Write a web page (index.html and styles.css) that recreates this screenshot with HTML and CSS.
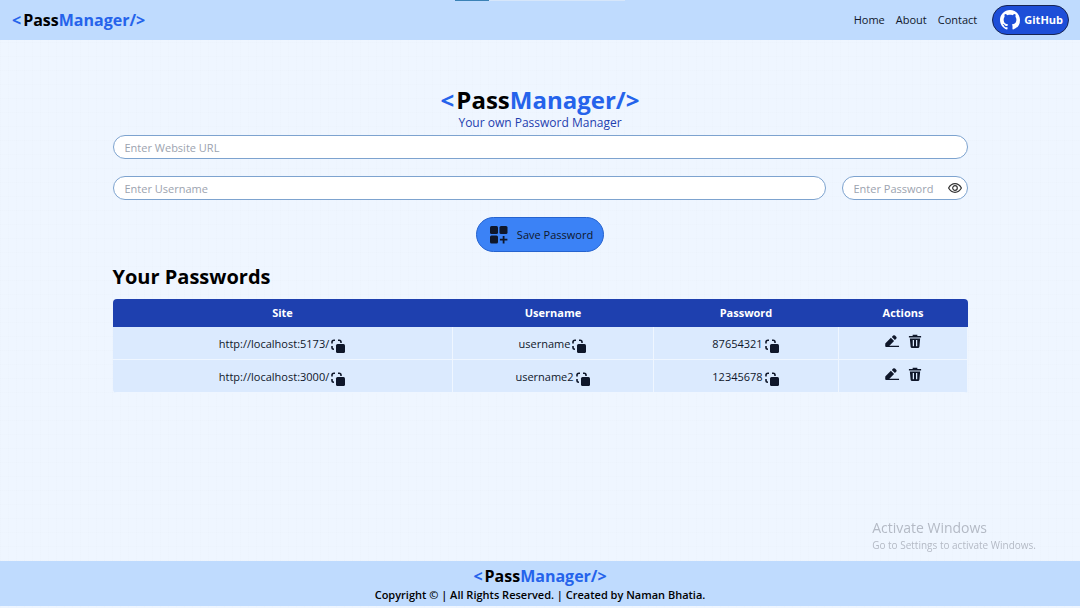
FILE: index.html
```html
<!DOCTYPE html>
<html lang="en">
<head>
    <meta charset="UTF-8">
    <meta name="viewport" content="width=device-width, initial-scale=1.0">
    <title>PassManager</title>
    <link rel="stylesheet" href="styles.css">
</head>
<body>
    <!-- icons used more than once -->
    <svg class="sprite" aria-hidden="true">
        <symbol id="copy" viewBox="0 0 14 14">
            <path d="M1 4.500V3Q1 1.200 3 1.200H4M7 1.200h1.200Q10 1.200 10 3v1M1 7v1.500Q1 10.200 3 10.200" fill="none" stroke="currentColor" stroke-width="1.600"/>
            <rect x="5" y="5" width="9" height="9" rx="1.500" fill="currentColor"/>
        </symbol>
        <symbol id="edit" viewBox="0 0 16 16">
            <path d="M.8 12.800V10l6-6 3.400 3.400L5 12.800zM7.800 3.100 9.200 1.700q1-1 2 0l1.300 1.300q1 1 0 2l-1.400 1.400z" fill="currentColor"/>
            <path d="M1 13.200h14.500" stroke="currentColor" stroke-width="1.400"/>
        </symbol>
        <symbol id="trash" viewBox="0 0 14 16">
            <path d="M.5 2h4V.7h5V2h4v1.700H.5z" fill="currentColor"/>
            <path d="M1.500 4.800h11l-.8 8.700q-.1 1.500-1.700 1.500H4q-1.600 0-1.700-1.500zM4.600 6.500v6.500h1.300V6.500zm3.500 0v6.500h1.300V6.500z" fill="currentColor" fill-rule="evenodd"/>
        </symbol>
    </svg>

    <nav class="navbar">
        <div class="logo"><span class="blue open">&lt;</span>Pass<span class="blue">Manager/&gt;</span></div>
        <div class="links">
            <a href="#">Home</a>
            <a href="#">About</a>
            <a href="#">Contact</a>
            <button class="github" type="button">
                <svg width="20" height="20" viewBox="0 0 16 16" aria-hidden="true"><path fill="#fff" d="M8 0C3.580 0 0 3.580 0 8c0 3.540 2.290 6.530 5.470 7.590.4.070.55-.17.55-.38 0-.19-.01-.82-.01-1.490-2.010.37-2.530-.49-2.690-.94-.09-.23-.48-.94-.82-1.130-.28-.15-.68-.52-.01-.53.63-.01 1.080.58 1.230.82.72 1.210 1.870.87 2.330.66.07-.52.28-.87.51-1.070-1.780-.2-3.640-.89-3.640-3.950 0-.87.31-1.590.82-2.150-.08-.2-.36-1.020.08-2.120 0 0 .67-.21 2.200.82.64-.18 1.320-.27 2-.27s1.360.09 2 .27c1.530-1.040 2.200-.82 2.200-.82.44 1.100.16 1.920.08 2.120.51.56.82 1.270.82 2.150 0 3.070-1.870 3.750-3.650 3.950.29.25.54.73.54 1.480 0 1.070-.01 1.930-.01 2.200 0 .21.15.46.55.38A8.010 8.010 0 0 0 16 8c0-4.420-3.580-8-8-8z"/></svg>
                GitHub
            </button>
        </div>
        <div class="loader"><div class="bar"></div></div>
    </nav>

    <main class="container">
        <h1 class="title"><span class="blue open">&lt;</span>Pass<span class="blue">Manager/&gt;</span></h1>
        <p class="tagline">Your own Password Manager</p>

        <form class="form">
            <input type="text" placeholder="Enter Website URL" aria-label="Website URL">
            <div class="row">
                <input type="text" placeholder="Enter Username" aria-label="Username">
                <div class="password">
                    <input type="password" placeholder="Enter Password" aria-label="Password">
                    <button class="eye" type="button" aria-label="Show password">
                        <svg width="14" height="14" viewBox="0 0 14 14" fill="none" stroke="#333" stroke-width="1.200" aria-hidden="true">
                            <path d="M.6 7Q3 2.700 7 2.700T13.400 7Q11 11.300 7 11.300T.6 7z"/>
                            <circle cx="7" cy="7" r="2.300"/>
                        </svg>
                    </button>
                </div>
            </div>
            <button class="save" type="button">
                <svg width="18" height="18" viewBox="0 0 18 18" fill="currentColor" aria-hidden="true">
                    <rect x="0" y="0" width="8" height="8" rx="1.500"/>
                    <rect x="9.500" y="0" width="8" height="8" rx="1.500"/>
                    <rect x="0" y="9.500" width="8" height="8" rx="1.500"/>
                    <path d="M12.700 10h1.800v2.700h2.900v1.800h-2.900v2.900h-1.800v-2.900H9.900v-1.800h2.800z"/>
                </svg>
                Save Password
            </button>
        </form>

        <h2>Your Passwords</h2>
        <table>
            <thead>
                <tr>
                    <th class="site">Site</th>
                    <th class="user">Username</th>
                    <th class="pass">Password</th>
                    <th class="act">Actions</th>
                </tr>
            </thead>
            <tbody>
                <tr>
                    <td><div class="cell"><a href="http://localhost:5173/">http://localhost:5173/</a><button type="button" aria-label="Copy site"><svg class="copy"><use href="#copy"/></svg></button></div></td>
                    <td><div class="cell">username<button type="button" aria-label="Copy username"><svg class="copy"><use href="#copy"/></svg></button></div></td>
                    <td><div class="cell">87654321<button type="button" aria-label="Copy password"><svg class="copy"><use href="#copy"/></svg></button></div></td>
                    <td><div class="actions"><button type="button" aria-label="Edit"><svg class="edit"><use href="#edit"/></svg></button><button type="button" aria-label="Delete"><svg class="trash"><use href="#trash"/></svg></button></div></td>
                </tr>
                <tr>
                    <td><div class="cell"><a href="http://localhost:3000/">http://localhost:3000/</a><button type="button" aria-label="Copy site"><svg class="copy"><use href="#copy"/></svg></button></div></td>
                    <td><div class="cell">username2<button type="button" aria-label="Copy username"><svg class="copy"><use href="#copy"/></svg></button></div></td>
                    <td><div class="cell">12345678<button type="button" aria-label="Copy password"><svg class="copy"><use href="#copy"/></svg></button></div></td>
                    <td><div class="actions"><button type="button" aria-label="Edit"><svg class="edit"><use href="#edit"/></svg></button><button type="button" aria-label="Delete"><svg class="trash"><use href="#trash"/></svg></button></div></td>
                </tr>
            </tbody>
        </table>
    </main>

    <footer>
        <div class="logo"><span class="blue open">&lt;</span>Pass<span class="blue">Manager/&gt;</span></div>
        <p>Copyright © | All Rights Reserved. | Created by Naman Bhatia.</p>
    </footer>

    <div class="watermark">
        <p class="big">Activate Windows</p>
        <p>Go to Settings to activate Windows.</p>
    </div>
</body>
</html>
```
FILE: styles.css
```css
*{
    box-sizing: border-box;
    margin: 0;
    padding: 0;
}
body{
    min-height: 100vh;
    display: flex;
    flex-direction: column;
    padding-bottom: 2px;
    font-family: "Open Sans", "Noto Sans", sans-serif;
    font-size: 11px;
    line-height: 16px;
    color: #0f172a;
    background-color: #eff6ff;
    background-image: linear-gradient(to right, #80808003 1px, transparent 1px), linear-gradient(to bottom, #80808003 1px, transparent 1px);
    background-size: 8px 14px;
}
button{
    font: inherit;
    color: inherit;
    border: none;
    background: none;
    cursor: pointer;
}
a{
    color: inherit;
    text-decoration: none;
}
svg{
    display: block;
}
.sprite{
    position: absolute;
    width: 0;
    height: 0;
}
.blue{
    color: #2563eb;
}
.open{
    margin-right: 2px;
}

/* navbar */
.navbar{
    position: relative;
    height: 40px;
    padding: 0 11px 0 12px;
    display: flex;
    align-items: center;
    justify-content: space-between;
    background-color: #bfdbfe;
}
.logo{
    font-size: 16px;
    line-height: 22px;
    font-weight: bold;
    color: #000;
}
.links{
    display: flex;
    align-items: center;
    gap: 11px;
}
.github{
    display: flex;
    align-items: center;
    gap: 4px;
    height: 30px;
    margin-left: 4px;
    padding: 0 5px 0 7px;
    border: 1px solid #172554;
    border-radius: 15px;
    background-color: #1d4ed8;
    color: #fff;
    font-weight: bold;
}
.loader{
    position: absolute;
    top: 0;
    left: 455px;
    width: 170px;
    height: 1px;
    background-color: #d6e6fa;
}
.bar{
    width: 20%;
    height: 1px;
    background-color: #3b82b6;
}

/* main */
.container{
    flex: 1;
    width: 80%;
    max-width: 855px;
    margin: 0 auto;
    padding-top: 45px;
}
.title{
    font-size: 24px;
    line-height: 30px;
    text-align: center;
    color: #000;
}
.tagline{
    font-size: 12px;
    line-height: 15px;
    text-align: center;
    color: #1e40af;
}
.form{
    display: flex;
    flex-direction: column;
    align-items: center;
    gap: 17px;
    padding-top: 5px;
}
.row{
    display: flex;
    gap: 16px;
    width: 100%;
}
input{
    width: 100%;
    height: 24px;
    padding: 0 11px;
    border: 1px solid #7da3cf;
    border-radius: 12px;
    background-color: #fff;
    font: inherit;
    outline: none;
}
input::placeholder{
    color: #9ca3af;
}
.password{
    position: relative;
    flex: 0 0 126px;
}
.eye{
    position: absolute;
    top: 5px;
    right: 6px;
}
.save{
    display: flex;
    align-items: center;
    gap: 9px;
    height: 35px;
    padding: 0 10px 0 13px;
    border: 1px solid #2563cf;
    border-radius: 18px;
    background-color: #3b82f6;
}
h2{
    padding: 11px 0 8px;
    font-size: 20px;
    line-height: 28px;
    color: #000;
}

/* table */
table{
    width: 100%;
    table-layout: fixed;
    border-collapse: separate;
    border-spacing: 0;
    border-radius: 4px;
    overflow: hidden;
}
th{
    height: 28px;
    background-color: #1e40af;
    color: #fff;
}
.site{
    width: 340px;
}
.user{
    width: 201px;
}
.pass{
    width: 185px;
}
td{
    height: 33px;
    background-color: #dbeafe;
    border-right: 1px solid #eff6ff;
    border-bottom: 1px solid #eff6ff;
}
.cell{
    display: flex;
    justify-content: center;
    align-items: center;
    gap: 2px;
    padding-top: 2px;
}
.cell button{
    padding-top: 4px;
}
.copy{
    width: 14px;
    height: 14px;
}
.actions{
    display: flex;
    justify-content: center;
    gap: 8px;
    padding-bottom: 3px;
}
.edit{
    width: 16px;
    height: 15px;
}
.trash{
    width: 14px;
    height: 15px;
}

/* footer */
footer{
    height: 45px;
    padding-top: 4px;
    text-align: center;
    font-weight: 600;
    color: #000;
    background-color: #bfdbfe;
}
.watermark{
    position: fixed;
    right: 44px;
    bottom: 55px;
    font-size: 10px;
    line-height: 16px;
    color: #b4bac5;
}
.big{
    font-size: 14px;
    line-height: 18px;
}
```
